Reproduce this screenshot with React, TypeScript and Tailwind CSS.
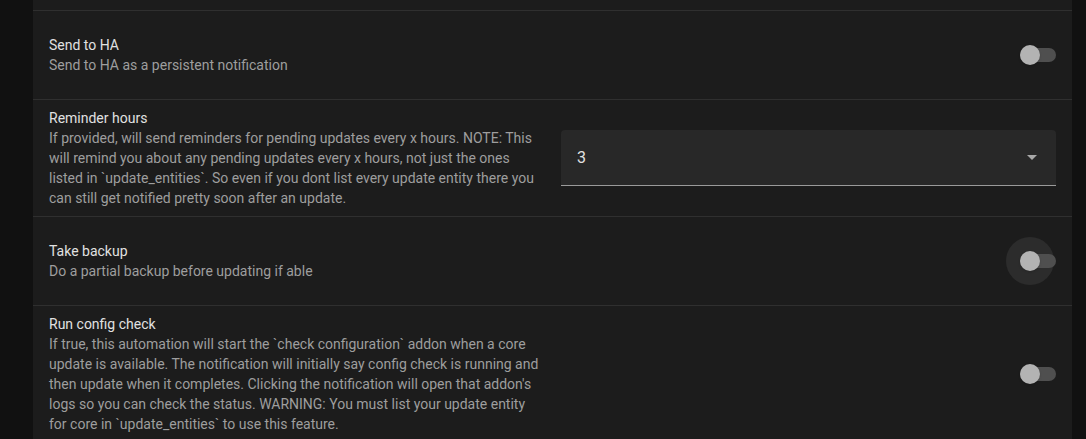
import React from "react";

type Row = {
  title: string;
  description: string;
  control: "toggle" | "toggle-focus" | "select";
};

const rows: Row[] = [
  {
    title: "Send to HA",
    description: "Send to HA as a persistent notification",
    control: "toggle",
  },
  {
    title: "Reminder hours",
    description:
      "If provided, will send reminders for pending updates every x hours. NOTE: This will remind you about any pending updates every x hours, not just the ones listed in `update_entities`. So even if you dont list every update entity there you can still get notified pretty soon after an update.",
    control: "select",
  },
  {
    title: "Take backup",
    description: "Do a partial backup before updating if able",
    control: "toggle-focus",
  },
  {
    title: "Run config check",
    description:
      "If true, this automation will start the `check configuration` addon when a core update is available. The notification will initially say config check is running and then update when it completes. Clicking the notification will open that addon's logs so you can check the status. WARNING: You must list your update entity for core in `update_entities` to use this feature.",
    control: "toggle",
  },
];

function Toggle({ focused }: { focused?: boolean }) {
  return (
    <div className="relative w-[36px] h-[20px] flex items-center">
      {focused && (
        <div className="absolute left-[-14px] top-[-14px] w-[48px] h-[48px] rounded-full bg-[#2c2c2c]" />
      )}
      <div className="relative w-[36px] h-[14px] rounded-full bg-[#4f4f4f]" />
      <div className="absolute left-0 top-0 w-[20px] h-[20px] rounded-full bg-[#b3b3b3] shadow" />
    </div>
  );
}

function Select() {
  return (
    <div className="w-full h-[56px] bg-[#282828] rounded-t-[4px] border-b border-[#9a9a9a] flex items-center justify-between pl-4 pr-[19px]">
      <span className="text-[16px] text-[#e1e1e1]">3</span>
      <svg width="10" height="5" viewBox="0 0 10 5">
        <path d="M0 0 L5 5 L10 0 Z" fill="#a8a8a8" />
      </svg>
    </div>
  );
}

export default function App() {
  return (
    <div
      className="flex w-[1086px] h-[439px] overflow-hidden bg-[#111111]"
      style={{ fontFamily: "Roboto, 'Noto Sans', sans-serif" }}
    >
      <div className="w-[33px] shrink-0" />
      <div className="flex-1 bg-[#1c1c1c] flex flex-col">
        <div className="h-[10px] shrink-0" />
        {rows.map((r, i) => (
          <div
            key={i}
            className="border-t border-[#2f2f2f] px-4 py-2 flex items-center gap-6 min-h-[89px] shrink-0"
          >
            <div
              className={
                r.control === "select"
                  ? "w-[488px] shrink-0 text-[14px] leading-[20px]"
                  : "w-[492px] shrink-0 text-[14px] leading-[20px]"
              }
            >
              <div className="text-[#e1e1e1]">{r.title}</div>
              <div className="text-[#9e9e9e]">{r.description}</div>
            </div>
            <div className="flex-1 flex justify-end">
              {r.control === "select" ? (
                <Select />
              ) : (
                <Toggle focused={r.control === "toggle-focus"} />
              )}
            </div>
          </div>
        ))}
      </div>
      <div className="w-[14px] shrink-0" />
    </div>
  );
}
